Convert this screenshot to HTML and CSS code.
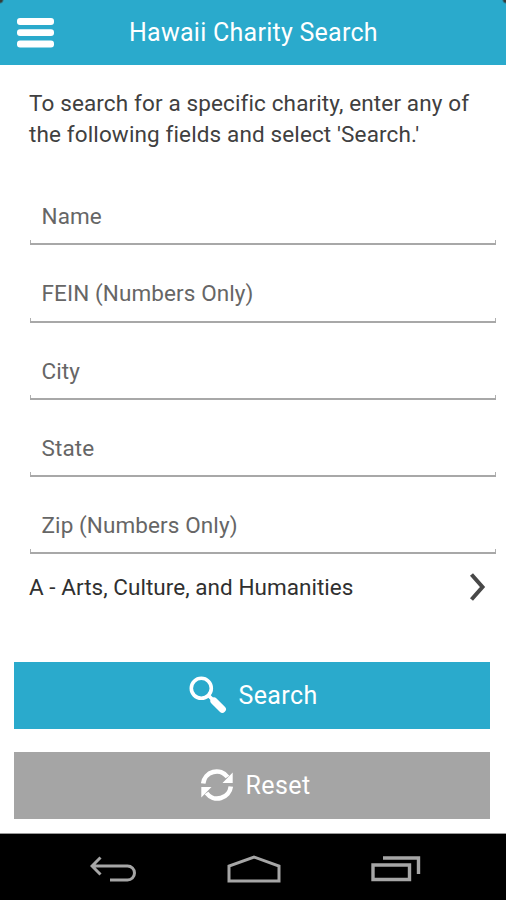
FILE: index.html
```html
<!DOCTYPE html>
<html lang="en">
<head>
<meta charset="utf-8">
<title>Hawaii Charity Search</title>
<link rel="stylesheet" href="styles.css">
</head>
<body>
<div class="app">
  <header class="topbar">
    <svg class="menu" width="37" height="30" viewBox="0 0 37 30"><g fill="#fff"><rect width="37" height="7" rx="3"/><rect y="11.3" width="37" height="6.6" rx="3"/><rect y="22.6" width="37" height="7" rx="3"/></g></svg>
    <h1 class="title">Hawaii Charity Search</h1>
  </header>
  <main class="content">
    <p class="intro"><span class="line1">To search for a specific charity, enter any of</span><br><span class="line2">the following fields and select 'Search.'</span></p>
    <div class="fields">
      <div class="field"><span>Name</span></div>
      <div class="field"><span>FEIN (Numbers Only)</span></div>
      <div class="field"><span>City</span></div>
      <div class="field"><span>State</span></div>
      <div class="field"><span>Zip (Numbers Only)</span></div>
    </div>
    <div class="category">
      <span class="category-name">A - Arts, Culture, and Humanities</span>
      <svg width="18" height="30" viewBox="0 0 18 30"><path d="M2.500 2.500 13.500 15 2.500 27.500" fill="none" stroke="#484848" stroke-width="4"/></svg>
    </div>
    <div class="button search">
      <svg width="38" height="38" viewBox="0 0 38 38"><circle cx="12.300" cy="12.300" r="10" fill="none" stroke="#fff" stroke-width="3.600"/><path d="M19.500 19.500 24 24" stroke="#fff" stroke-width="3.500"/><path d="M25 25 33.300 33.300" stroke="#fff" stroke-width="7.200" stroke-linecap="round"/></svg>
      <span>Search</span>
    </div>
    <div class="button reset">
      <svg width="34" height="34" viewBox="0 0 34 34"><g fill="none" stroke="#fff" stroke-width="4.600"><path d="M3.200 15.500A13.500 13.500 0 0 1 27.500 9"/><path d="M30.800 18.500A13.500 13.500 0 0 1 6.500 25"/></g><path d="M32.700 4.500V15H22.500ZM1.300 29.500V19H11.500Z" fill="#fff"/></svg>
      <span>Reset</span>
    </div>
  </main>
  <nav class="navbar">
    <svg width="47" height="26" viewBox="0 0 47 26"><path d="M10.500 1.500 2 10 10.500 18.500M2 10H37.500A7 7 0 0 1 37.500 24H20" fill="none" stroke="#a6a6a6" stroke-width="3"/></svg>
    <svg width="54" height="28" viewBox="0 0 54 28"><path d="M2 26V11L27 2 52 11V26Z" fill="none" stroke="#a6a6a6" stroke-width="3"/></svg>
    <svg width="50" height="26" viewBox="0 0 50 26"><path d="M2 9H38.500V23.500H2ZM12 2H47.500V18" fill="none" stroke="#a6a6a6" stroke-width="3.400"/></svg>
  </nav>
</div>
</body>
</html>
```

FILE: styles.css
```css
* { box-sizing: border-box; }
body { margin: 0; background: #fff; font-family: Roboto, "Liberation Sans", sans-serif; }
.app { width: 506px; height: 900px; display: flex; flex-direction: column; overflow: hidden; }
.topbar {
  height: 65px;
  display: flex;
  align-items: center;
  padding-left: 17px;
  background: radial-gradient(circle at 0 0, #363c38 2px, transparent 4px), radial-gradient(circle at 100% 0, #363c38 2px, transparent 4px), #2aaacc;
}
.menu { margin-top: 1px; }
.title { margin: 1px 0 0 75px; font-size: 25px; line-height: 30px; font-weight: 400; letter-spacing: 0.26px; color: #fff; white-space: nowrap; }
.content { height: 768px; display: flex; flex-direction: column; }
.intro { margin: 23px 0 0 29px; font-size: 22.5px; line-height: 31px; font-weight: 400; letter-spacing: 0.13px; color: #404040; white-space: nowrap; }
.fields { margin: 18px 10px 0 30px; }
.field {
  height: 77.3px;
  padding: 33px 0 0 11.5px;
  font-size: 22.5px;
  line-height: 30px;
  font-weight: 400;
  letter-spacing: 0.1px;
  color: #666;
  background:
    linear-gradient(#a8a8a8, #a8a8a8) left bottom / 100% 2px no-repeat,
    linear-gradient(#b0b0b0, #b0b0b0) left bottom / 1px 5px no-repeat,
    linear-gradient(#b0b0b0, #b0b0b0) right bottom / 1px 5px no-repeat;
}
.category { height: 66px; margin: 0 19px 0 29px; display: flex; align-items: center; justify-content: space-between; font-size: 22.5px; font-weight: 400; letter-spacing: 0.04px; color: #303030; }
.button { height: 67px; margin: 0 16px 0 14px; display: flex; align-items: center; justify-content: center; gap: 11px; color: #fff; font-size: 25px; letter-spacing: 0.4px; }
.search { margin-top: 41.5px; padding-left: 3px; background: #2aaacc; }
.search span { margin-top: 1px; }
.reset { margin-top: 23px; padding-left: 7px; background: #a5a5a5; }
.reset span { margin-top: 1px; }
.navbar { height: 67px; padding: 3px 85px 0 90px; display: flex; align-items: center; justify-content: space-between; background: #000; border-top: 1px solid #999; }
```
